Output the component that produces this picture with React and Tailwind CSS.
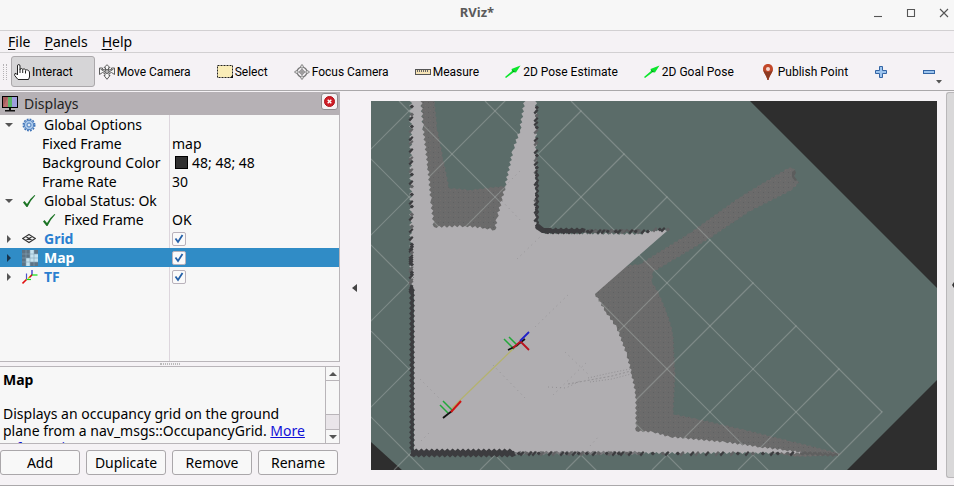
import React from "react";

/* ---------- toolbar icons (16x16) ---------- */

const HandIcon = () => (
  <svg width="16" height="16" viewBox="0 0 16 16" className="shrink-0" fill="#fff" stroke="#222" strokeWidth="1">
    <path d="M3.500 11V2Q3.500 .5 4.700 .5Q6 .5 6 2V6Q6 4.500 7.300 4.500Q8.500 4.500 8.700 5.500Q9.500 4.700 10.500 5Q11.500 5.300 11.600 6.200Q12.500 5.500 13.500 6Q14.500 6.500 15 7Q15.500 7.500 15.500 9V13L14.500 15.500H4L.7 11.500Q.3 9 2 9.300L3.500 11" />
    <path d="M6 6V9M8.700 5.500V9M11.500 6.500V9.500" />
  </svg>
);

const MoveIcon = () => (
  <svg width="16" height="16" viewBox="0 0 16 16" className="shrink-0" fill="#f7f7f7" stroke="#5c5c5c" strokeWidth="1">
    <path d="M8 .7L11 3.700H9.500V6L12.500 5.500V4L15.500 4V10.500L12.500 8.500L10 9.500V11.500H11L8 15.300L5 11.500H6V9.500L3.500 8.500L.5 10.500V4H3.500V5.500L6.500 6V3.700H5Z" />
    <path d="M1.500 5L6 8M14.500 5L10 8" />
    <circle cx="8" cy="7.500" r="2" fill="#bbb" />
  </svg>
);

const SelectIcon = () => (
  <svg width="16" height="16" viewBox="0 0 16 16" className="shrink-0">
    <rect x="0.500" y="1.500" width="15" height="12" fill="#faedb8" stroke="#222" strokeDasharray="2 1" />
    <path d="M16 10.500V14H13Z" fill="#111" />
  </svg>
);

const FocusIcon = () => (
  <svg width="16" height="16" viewBox="0 0 18 18" className="shrink-0" fill="none" stroke="#777">
    <circle cx="9" cy="9" r="5.500" strokeWidth="1.500" />
    <circle cx="9" cy="9" r="2.500" />
    <path d="M9 3V15M3 9H15" />
    <path d="M7.500 4V2.500L9 .5L10.500 2.500V4M7.500 14V15.500L9 17.500L10.500 15.500V14M4 7.500H2.500L.5 9L2.500 10.500H4M14 7.500H15.500L17.500 9L15.500 10.500H14" fill="#ddd" />
  </svg>
);

const RulerIcon = () => (
  <svg width="16" height="16" viewBox="0 0 16 16" className="shrink-0">
    <rect x="0.500" y="5.500" width="15" height="5" fill="#f5e3b6" stroke="#555" />
    <path d="M2.500 6V8M4.500 6V8M6.500 6V8M8.500 6V8M10.500 6V8M12.500 6V8" stroke="#666" />
  </svg>
);

const ArrowIcon = () => (
  <svg width="16" height="16" viewBox="0 0 16 16" className="shrink-0">
    <path d="M0 13L7 7L6.500 5L15.500 1.500L11 8.500L9 8L1 14Z" fill="#0be62c" />
    <path d="M7 5.500L10.500 8.500L8 7.800Z" fill="#087a18" />
  </svg>
);

const PinIcon = () => (
  <svg width="16" height="18" viewBox="0 0 16 18" className="shrink-0">
    <path d="M8 1C4.800 1 3 3.200 3 6C3 9.500 6.500 12 7.500 17H8.500C9.500 12 13 9.500 13 6C13 3.200 11.200 1 8 1Z" fill="#c2482a" />
    <path d="M8 9C10.500 9 12.500 7.500 12.700 6.500C12.500 10 9.500 12 8.500 17H7.500C6.500 12 3.500 10 3.300 6.500C4 8 6 9 8 9Z" fill="#8c3a22" />
    <circle cx="8" cy="6" r="2" fill="#f5d8d0" />
  </svg>
);

const PlusIcon = () => (
  <svg width="12" height="12" viewBox="0 0 12 12">
    <path d="M4.500 .5H7.500V4.500H11.500V7.500H7.500V11.500H4.500V7.500H.5V4.500H4.500Z" fill="#9cc4ee" stroke="#3465a4" />
  </svg>
);

const MinusIcon = () => (
  <svg width="12" height="12" viewBox="0 0 12 12">
    <rect x="0.500" y="4.500" width="11" height="3" fill="#9cc4ee" stroke="#3465a4" />
  </svg>
);

/* ---------- display tree icons ---------- */

const MonitorIcon = () => (
  <svg width="16" height="16" viewBox="0 0 16 16" className="shrink-0">
    <rect x="0.500" y="0.500" width="15" height="11" fill="#222" stroke="#000" />
    <rect x="1" y="1" width="5" height="10" fill="#bb6f6f" />
    <rect x="6" y="1" width="4" height="10" fill="#5db56a" />
    <rect x="10" y="1" width="5" height="10" fill="#9d9ddd" />
    <path d="M1 11L6 1H1Z" fill="#8b4a4c" opacity=".5" />
    <path d="M7 12H9V14H13V15.500H3V14H7Z" fill="#111" />
  </svg>
);

const GearIcon = () => (
  <svg width="14" height="14" viewBox="0 0 14 14">
    <circle cx="7" cy="7" r="5.700" fill="none" stroke="#3f74b8" strokeWidth="1.600" strokeDasharray="1.800 1.180" />
    <circle cx="7" cy="7" r="4.700" fill="#a9c8ea" stroke="#4a7dbf" />
    <circle cx="7" cy="7" r="2" fill="#dfeaf6" stroke="#4a7dbf" />
  </svg>
);

const CheckIcon = () => (
  <svg width="14" height="14" viewBox="0 0 14 14">
    <path d="M1 8.500L2.500 7L5 10Q8 4.500 12.500 1L13.300 1.500Q8.500 6.500 5.500 13H4.500Z" fill="#1c7425" />
  </svg>
);

const GridIcon = () => (
  <svg width="14" height="14" viewBox="0 0 14 14" fill="none" stroke="#333" strokeWidth="1.100">
    <path d="M7 2.500L13.300 6.500L7 10.500L.7 6.500ZM3.800 4.500L10.200 8.500M10.200 4.500L3.800 8.500" />
  </svg>
);

const MapIcon = () => (
  <svg width="16" height="16" viewBox="0 0 16 16">
    <rect width="16" height="16" fill="#5d7384" />
    <path d="M8 0H12V4H16V12H8V16H4V8H8Z" fill="#c5e2ee" />
    <path d="M0 4H16M0 8H16M0 12H16M4 0V16M8 0V16M12 0V16" stroke="#83a5b8" strokeWidth=".6" />
  </svg>
);

const TfIcon = () => (
  <svg width="16" height="16" viewBox="0 0 16 16" fill="none" strokeWidth="1.200">
    <path d="M6 9.500L10 5.500" stroke="#e8c200" />
    <path d="M10 6V1" stroke="#2020c0" />
    <path d="M10 6H15.500" stroke="#12e012" />
    <path d="M10 6L7.500 8.500" stroke="#c03" />
    <path d="M4.500 10V4.500" stroke="#5050c8" />
    <path d="M4.500 10.500H9" stroke="#12e012" />
    <path d="M4.500 10.500L.5 14.500" stroke="#e01010" strokeWidth="1.600" />
  </svg>
);

/* ---------- occupancy map drawing ---------- */

const GREY = "#b0aeb1";
const SHADE = "#6b6b6b";
const WALL = "#3c3c3f";

/* Turns straight edges into the stepped outline of rotated map cells. */
function jag(points, amp, closed) {
  const out = [];
  const count = closed ? points.length : points.length - 1;
  for (let i = 0; i < count; i++) {
    const [x1, y1] = points[i];
    const [x2, y2] = points[(i + 1) % points.length];
    const len = Math.hypot(x2 - x1, y2 - y1) || 1;
    const steps = Math.max(1, Math.round(len / 2.6));
    for (let s = 0; s < steps; s++) {
      const t = s / steps;
      const k = s === 0 ? 0 : s % 2 ? amp : -amp;
      const x = x1 + (x2 - x1) * t - ((y2 - y1) / len) * k;
      const y = y1 + (y2 - y1) * t + ((x2 - x1) / len) * k;
      out.push(x.toFixed(1) + "," + y.toFixed(1));
    }
  }
  if (!closed) out.push(points[points.length - 1].join(","));
  return out.join(" ");
}

const FREE = [
  [414, 98], [421, 98], [423, 127], [428, 167], [431, 200], [434, 227], [465, 226], [485, 228], [495, 230],
  [497, 218], [505, 187], [513, 150], [520, 130], [525, 98], [536, 98], [536, 226], [543, 233],
  [640, 234], [654, 230], [667, 231],
];
const FREE_TAIL = [
  [595, 294], [606, 312], [617, 328], [627, 355], [632, 375], [636, 395], [636, 431], [653, 432],
  [670, 437], [725, 442], [760, 447], [785, 450], [805, 453], [414, 453],
];
const NOTCH = [
  [420, 98], [434, 98], [437, 128], [443, 158], [449, 188], [470, 190], [506, 186], [497, 231], [433, 228],
];
const SHADOW = [
  [594, 294], [625, 266], [640, 264], [690, 233], [740, 197], [790, 167], [795, 169], [794, 178], [799, 183],
  [790, 191], [750, 211], [710, 238], [653, 272], [652, 282], [659, 294], [667, 313], [673, 333], [675, 376],
  [673, 414], [697, 419], [745, 430], [790, 441], [842, 454], [800, 457], [634, 434],
];

const range = (a, b, step) => {
  const r = [];
  for (let v = a; v <= b; v += step) r.push(v);
  return r;
};

/* Grid limits: no line goes past x-y=471 or x+y=1294. */
const FALLING = range(-218, 471, 86);
const RISING = range(434, 1294, 86);

/* A run of occupied cells; the slant alternates so the wall looks uneven. */
function Cells({ x, y, dx, dy, n, skip }) {
  return range(0, n - 1, 1)
    .filter((i) => (i * 7) % 11 > skip)
    .map((i) => {
      const cx = x + dx * i;
      const cy = y + dy * i;
      const lean = (i * 3) % 5 < 3 ? "l2 -2l1.500 1.500l-3.500 4l-1.500 -2z" : "l2 -1.500l2 2l-2 2l-2 -1.500z";
      return <path key={i} d={`M${cx - 2} ${cy}${lean}`} fill={(i * 5) % 7 < 2 ? "#626264" : WALL} />;
    });
}

function MapView() {
  return (
    <svg
      role="img"
      aria-label="Map view"
      viewBox="371 101 566 369"
      preserveAspectRatio="xMidYMid slice"
      className="block h-full w-full bg-[#5b6c69]"
    >
      <defs>
        <pattern id="speck" width="5" height="5" patternUnits="userSpaceOnUse">
          <rect width="1" height="1" fill="#857370" opacity=".3" />
          <rect x="3" y="2" width="1" height="1" fill="#505052" opacity=".4" />
        </pattern>
      </defs>
      <path d="M749 100L938 289V100ZM938 379L846 471H938ZM370 441L403 471H370Z" fill="#2e2e2e" />
      <polygon points={jag(NOTCH, 0.7, true)} fill={SHADE} />
      <polygon points={jag(SHADOW, 0.7, true)} fill={SHADE} />
      <polygon points={jag(NOTCH, 0.7, true)} fill="url(#speck)" />
      <polygon points={jag(SHADOW, 0.7, true)} fill="url(#speck)" />
      <path d="M792 172l3 -2l1 3l-2 3l3 4l-2 1l-3 -4z" fill="#5c5d5d" />
      <g stroke="#a8b0ae" strokeOpacity=".45" strokeWidth="1.200">
        {FALLING.map((c) => (
          <line key={c} x1={101 + c} y1="101" x2={(1294 + c) / 2} y2={(1294 - c) / 2} />
        ))}
        {RISING.map((c) => (
          <line key={c} x1={(c + 471) / 2} y1={(c - 471) / 2} x2={c - 470} y2="470" />
        ))}
      </g>
      <polygon points={jag(FREE, 1.1, false) + " " + jag(FREE_TAIL, 0.9, false)} fill={GREY} />

      {/* walls */}
      <polyline points={jag([[413, 98], [413, 290]], 1.5, false)} fill="none" stroke={GREY} strokeWidth="3" />
      <Cells x={412} y={102} dx={0} dy={4} n={48} skip={3} />
      <Cells x={412} y={240} dx={0} dy={4} n={14} skip={0} />
      <polyline points={jag([[412, 285], [412, 453]], 1, false)} fill="none" stroke={WALL} strokeWidth="3" />
      <Cells x={537} y={103} dx={0} dy={4} n={32} skip={1} />
      <polyline points={jag([[537, 170], [537, 225], [543, 231], [575, 231]], 1, false)} fill="none" stroke={WALL} strokeWidth="2" />
      <path d="M535 225l4 -1l5 4h6l2 3l-3 2h-7l-6 -4z" fill={WALL} />
      <polyline points={jag([[545, 231], [585, 231]], 1, false)} fill="none" stroke={WALL} strokeWidth="4" />
      <polyline points={jag([[585, 231], [640, 231]], 1, false)} fill="none" stroke="#5a5a5c" strokeWidth="2" />
      <Cells x={584} y={231} dx={4} dy={0} n={17} skip={0} />
      <Cells x={656} y={229} dx={4} dy={0} n={4} skip={-1} />
      <polyline points={jag([[411, 453], [515, 453]], 1.2, false)} fill="none" stroke={WALL} strokeWidth="5" />
      <polyline points={jag([[515, 453], [640, 453]], 1, false)} fill="none" stroke="#77777a" strokeWidth="2" />
      <Cells x={515} y={453} dx={4} dy={0} n={33} skip={1} />
      <Cells x={648} y={453} dx={5} dy={0} n={32} skip={3} />
      <polyline points={jag([[800, 453], [838, 455]], 1, false)} fill="none" stroke="#5f5f5f" strokeWidth="2" />

      {/* faint marks inside the free space */}
      <g stroke="#8f8d90" strokeWidth="1" strokeDasharray="1 4" opacity=".7" fill="none">
        <path d="M505 186L520 171M517 259L540 237M535 327L570 293M420 379L440 399M493 365L526 399M565 352L590 376" />
        <path d="M553 395L588 361M421 441L430 432M590 446L600 435M502 201L522 222" />
      </g>
      <g stroke="#939194" strokeWidth="1" fill="none">
        <path d="M548 387L566 388L580 381" strokeDasharray="1 3" />
        <path d="M568 384L590 380L612 376L631 371" strokeDasharray="2 2" />
        <path d="M588 378L610 373L630 369M590 382L612 379L631 374" strokeDasharray="1 2" />
      </g>

      {/* robot frames */}
      <path d="M452 408L515 347" stroke="#b4b26e" strokeWidth="1.300" />
      <g strokeWidth="1.500" fill="none">
        <path d="M504 339L514 349M509 337L518 346" stroke="#22a83a" />
        <path d="M508 350L516 346L525 339" stroke="#111" strokeWidth="1.600" />
        <path d="M513 348L521 341M520 341L529 350" stroke="#b81420" strokeWidth="1.800" />
        <path d="M520 341L529 332" stroke="#2020c8" strokeWidth="1.800" />
        <path d="M440 405L448 413M443 401L452 410" stroke="#22a83a" />
        <path d="M443 418L448 414L452 411" stroke="#111" strokeWidth="1.800" />
        <path d="M451 412L461 401" stroke="#cf1414" strokeWidth="2" />
      </g>
    </svg>
  );
}

/* ---------- window parts ---------- */

const TOOLS = [
  { name: "Interact", Icon: HandIcon, active: true },
  { name: "Move Camera", Icon: MoveIcon },
  { name: "Select", Icon: SelectIcon },
  { name: "Focus Camera", Icon: FocusIcon },
  { name: "Measure", Icon: RulerIcon },
  { name: "2D Pose Estimate", Icon: ArrowIcon },
  { name: "2D Goal Pose", Icon: ArrowIcon },
  { name: "Publish Point", Icon: PinIcon },
];

function Toolbar() {
  return (
    <div role="toolbar" aria-label="Tools" className="relative flex h-[38px] shrink-0 items-center border-b border-[#aaa8aa] pl-[3px]">
      <span className="mr-1 h-4 w-1 border-x border-dotted border-[#b5b2b5]" />
      {TOOLS.map(({ name, Icon, active }) => (
        <button
          key={name}
          type="button"
          aria-pressed={!!active}
          className={
            "mr-px flex h-[31px] shrink-0 items-center gap-0.5 rounded-[3px] border pr-[21px] pl-[2px] font-[Roboto,sans-serif] text-[12px] whitespace-nowrap " +
            (active ? "border-[#aba8ab] bg-[#d6d5d7]" : "border-transparent")
          }
        >
          <Icon />
          {name}
        </button>
      ))}
      <button type="button" aria-label="Add tool" className="ml-1 flex w-[48px] shrink-0 items-center">
        <PlusIcon />
      </button>
      <button type="button" aria-label="Remove tool" className="flex shrink-0 items-center">
        <MinusIcon />
      </button>
      <svg width="6" height="4" viewBox="0 0 6 4" className="absolute right-3 bottom-1.5">
        <path d="M0 0H6L3 3.500Z" fill="#555" />
      </svg>
    </div>
  );
}

const ROWS = [
  { name: "Global Options", Icon: GearIcon, arrow: "down" },
  { name: "Fixed Frame", value: "map", child: true },
  { name: "Background Color", value: "48; 48; 48", swatch: true, child: true },
  { name: "Frame Rate", value: "30", child: true },
  { name: "Global Status: Ok", Icon: CheckIcon, arrow: "down" },
  { name: "Fixed Frame", Icon: CheckIcon, value: "OK", nested: true },
  { name: "Grid", Icon: GridIcon, arrow: "right", check: true },
  { name: "Map", Icon: MapIcon, arrow: "right", check: true, selected: true },
  { name: "TF", Icon: TfIcon, arrow: "right", check: true },
];

function Tree() {
  return (
    <div className="flex min-h-0 flex-1 flex-col border-r border-b border-[#b9b5b9] bg-[#f7f7f7]">
      <table className="w-full table-fixed border-separate border-spacing-0 text-[14px] leading-[19px]">
        <colgroup>
          <col className="w-[170px]" />
          <col />
        </colgroup>
        <tbody>
          {ROWS.map((r, i) => (
            <tr key={i} className={"h-[19px] " + (r.selected ? "bg-[#308cc6] text-white" : "")}>
              <td className={"border-r p-0 " + (r.selected ? "border-[#308cc6]" : "border-[#ddd6dd]")}>
                <div className={"flex h-[19px] items-center whitespace-nowrap " + (r.nested ? "pl-[20px]" : "")}>
                  {r.child ? (
                    <span className="w-[42px]" />
                  ) : (
                    <>
                      <span className="flex w-[22px] pl-[5px]">
                        {r.arrow && (
                          <svg width="8" height="8" viewBox="0 0 8 8">
                            <path d={r.arrow === "down" ? "M0 2H8L4 6Z" : "M2 0L6 4L2 8Z"} fill={r.selected ? "#17324a" : "#555"} />
                          </svg>
                        )}
                      </span>
                      <span className="flex w-[22px] items-center">
                        <r.Icon />
                      </span>
                    </>
                  )}
                  {r.check ? (
                    <label htmlFor={"show-" + i} className={"font-bold " + (r.selected ? "" : "text-[#2a7fd0]")}>
                      {r.name}
                    </label>
                  ) : (
                    r.name
                  )}
                </div>
              </td>
              <td className="p-0 pl-[2px]">
                <div className="flex h-[19px] items-center gap-1">
                  {r.swatch && <span className="ml-[3px] size-[13px] border border-black bg-[#303030]" />}
                  {r.check && (
                    <span className="grid size-[14px] place-items-center">
                      <input
                        id={"show-" + i}
                        type="checkbox"
                        defaultChecked
                        className="col-start-1 row-start-1 size-[14px] appearance-none rounded-[2px] border border-[#b9b2bb] bg-[#fafafa]"
                      />
                      <svg width="10" height="10" viewBox="0 0 10 10" className="pointer-events-none col-start-1 row-start-1">
                        <path d="M1.500 4.500L4 8L8.500 1" fill="none" stroke="#2360a8" strokeWidth="1.800" />
                      </svg>
                    </span>
                  )}
                  {r.value}
                </div>
              </td>
            </tr>
          ))}
        </tbody>
      </table>
      <div className="w-[170px] flex-1 border-r border-[#ddd6dd]" />
    </div>
  );
}

function DisplaysDock() {
  return (
    <section className="flex w-[340px] shrink-0 flex-col pt-px">
      <header className="flex h-[23px] shrink-0 items-center gap-1.5 bg-[#b6b1b5] px-[2px] text-[14px] text-[#222]">
        <MonitorIcon />
        <h2 className="flex-1">Displays</h2>
        <button type="button" aria-label="Close" className="mb-1 flex size-[17px] items-center justify-center rounded-[3px] border border-[#8f8b8f] bg-[#f4f2f4]">
          <svg width="11" height="11" viewBox="0 0 11 11">
            <circle cx="5.500" cy="5.500" r="5" fill="#cf1d27" stroke="#b01018" />
            <path d="M3.700 3.700L7.300 7.300M7.300 3.700L3.700 7.300" stroke="#fff" strokeWidth="1.400" />
          </svg>
        </button>
      </header>
      <Tree />
      <div className="flex h-[4px] shrink-0 items-center justify-center">
        <span className="h-0.5 w-5 border-y border-dotted border-[#bbb]" />
      </div>
      <div className="flex h-[78px] shrink-0 border border-l-0 border-[#b9b5b9] bg-[#f7f7f7]">
        <div className="flex-1 overflow-hidden pt-1 pl-[3px] text-[14px] leading-[17px] whitespace-nowrap">
          <p className="font-bold">Map</p>
          <p className="pt-[17px]">
            Displays an occupancy grid on the ground
            <br />
            plane from a nav_msgs::OccupancyGrid.{" "}
            <a href="#map" className="text-[#1010d8] underline">
              More
              <br />
              Information
            </a>
          </p>
        </div>
        <div className="flex w-[14px] flex-col border-l border-[#b9b5b9]">
          <button type="button" aria-label="Scroll up" className="flex h-[14px] items-center justify-center border-b border-[#b9b5b9]">
            <svg width="8" height="4" viewBox="0 0 8 4"><path d="M0 4H8L4 0Z" fill="#555" /></svg>
          </button>
          <span className="h-[34px] border-b border-[#b9b5b9]" />
          <span className="flex-1 bg-[#e9e5e9]" />
          <button type="button" aria-label="Scroll down" className="flex h-[14px] items-center justify-center border-t border-[#b9b5b9]">
            <svg width="8" height="4" viewBox="0 0 8 4"><path d="M0 0H8L4 4Z" fill="#555" /></svg>
          </button>
        </div>
      </div>
      <div className="mt-1.5 mb-[10px] grid grid-cols-4 gap-[6px] pr-[2px]">
        {["Add", "Duplicate", "Remove", "Rename"].map((b) => (
          <button key={b} type="button" className="h-[25px] rounded-[3px] border border-[#aaa7aa] bg-[#f8f8f8] text-[14px] leading-[19px]">
            {b}
          </button>
        ))}
      </div>
    </section>
  );
}

export default function App() {
  return (
    <div className="flex h-screen flex-col overflow-hidden border-b border-[#aaa8aa] bg-[#f5f2f5] font-['Noto_Sans',sans-serif] text-black">
      <header className="flex h-[31px] shrink-0 items-center border-b border-[#d2d0d2] bg-[#f7f7f7] pb-[5px]">
        <span className="w-[90px]" />
        <h1 className="flex-1 text-center text-[13px] font-bold text-[#5a5a5a]">RViz*</h1>
        <div className="flex w-[90px] items-center justify-end gap-[25px] pr-[6px]">
          {[
            ["Minimize", "M0 7.500H8"],
            ["Maximize", "M.5 .5H7.500V7.500H.5Z"],
            ["Close", "M0 0L8 8M8 0L0 8"],
          ].map(([label, d]) => (
            <button key={label} type="button" aria-label={label}>
              <svg width="8" height="8" viewBox="0 0 8 8" fill="none" stroke="#555" strokeWidth="1.100" className="overflow-visible">
                <path d={d} />
              </svg>
            </button>
          ))}
        </div>
      </header>
      <nav className="flex h-[22px] shrink-0 items-center gap-[14px] border-b border-[#d2d0d2] px-2 text-[14px]">
        {["File", "Panels", "Help"].map((m) => (
          <button key={m} type="button">
            <span className="underline underline-offset-2">{m[0]}</span>
            {m.slice(1)}
          </button>
        ))}
      </nav>
      <Toolbar />
      <main className="flex min-h-0 flex-1">
        <DisplaysDock />
        <div className="flex w-[31px] shrink-0 items-center pl-[12px]">
          <svg width="5" height="8" viewBox="0 0 5 8"><path d="M5 0V8L0 4Z" fill="#444" /></svg>
        </div>
        <div className="mt-[10px] mb-[15px] min-w-0 flex-1">
          <MapView />
        </div>
        <div className="mt-px mb-[7px] ml-[9px] flex w-2 shrink-0 items-center justify-end overflow-hidden rounded-l-[3px] border border-r-0 border-[#b9b7b9] bg-[#d9d8d9]">
          <svg width="2" height="6" viewBox="0 0 2 6"><path d="M2 0V6L0 3Z" fill="#333" /></svg>
        </div>
      </main>
    </div>
  );
}
